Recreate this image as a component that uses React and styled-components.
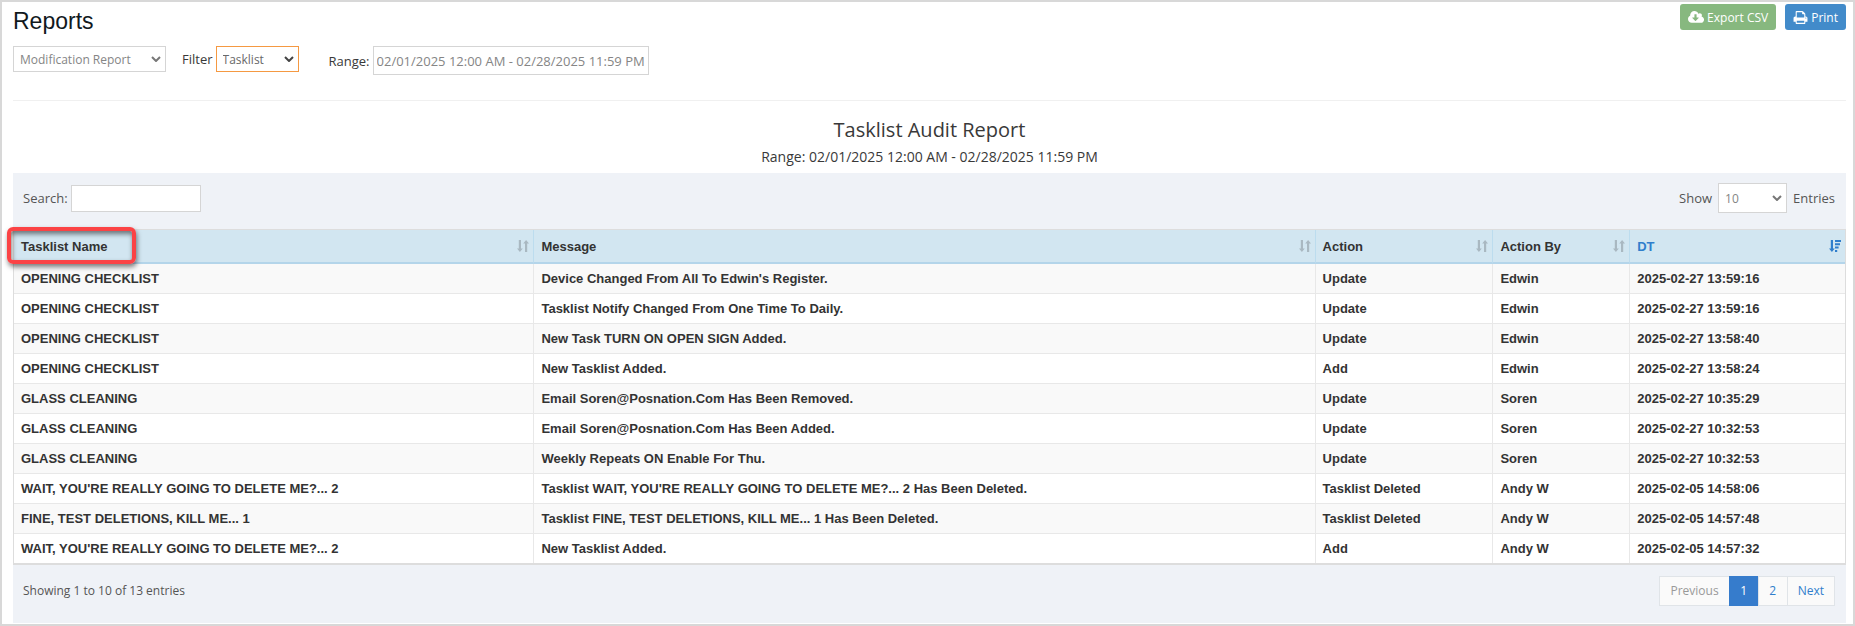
import { useState } from "react";
import styled, { createGlobalStyle, css } from "styled-components";

const GlobalStyle = createGlobalStyle`
	* {
		box-sizing: border-box;
	}

	body {
		margin: 0;
		background-color: #fff;
		color: #393939;
		font-family: "Open Sans", sans-serif;
		font-size: 13px;
		line-height: 20px;
	}

	button,
	input,
	select {
		font-family: inherit;
	}
`;

const Container = styled.div`
	display: flex;
	flex-direction: column;
	min-height: 100vh;
	border: 2px solid #d8d8d8;
	padding: 2px 7px 1px 11px;
`;

const Header = styled.header`
	display: flex;
	align-items: flex-start;
	justify-content: space-between;
`;

const PageTitle = styled.h1`
	margin: 0;
	font-family: "Liberation Sans", Arial, sans-serif;
	font-size: 23px;
	font-weight: 400;
	line-height: 34px;
	color: #11191d;
`;

const ButtonGroup = styled.div`
	display: flex;
	gap: 9px;
`;

const Button = styled.button`
	display: flex;
	align-items: center;
	gap: 3px;
	height: 26px;
	padding: 0 8px;
	border: none;
	border-radius: 3px;
	background-color: ${(props) => props.$color};
	color: white;
	font-size: 12px;
	cursor: pointer;
`;

const ButtonIcon = styled.svg`
	height: 15px;
	fill: currentColor;
`;

const Filters = styled.form`
	display: flex;
	align-items: flex-start;
	padding: 8px 0 25px;
	border-bottom: 1px solid #f0f0f0;
`;

const Field = styled.div`
	display: flex;
	align-items: center;
	gap: ${(props) => props.$gap || 3}px;
	margin-right: ${(props) => props.$space || 0}px;
`;

const SelectBox = styled.div`
	display: grid;
	align-items: center;
	width: ${(props) => props.$width}px;
	color: ${(props) => (props.$active ? "#444" : "#777")};

	> * {
		grid-area: 1 / 1;
	}
`;

const Select = styled.select`
	appearance: none;
	width: 100%;
	height: ${(props) => props.$height || 26}px;
	padding: 0 6px;
	border: 1px solid ${(props) => (props.$active ? "#f59942" : "#d5d5d5")};
	border-radius: 0;
	background-color: #fff;
	color: ${(props) => (props.$active ? "#696969" : "#858585")};
	font-size: 12px;
`;

const Chevron = styled.svg`
	justify-self: end;
	width: 10px;
	height: 6px;
	margin-right: 5px;
	fill: none;
	stroke: currentColor;
	stroke-width: 2;
	pointer-events: none;
`;

const Input = styled.input`
	width: ${(props) => props.$width}px;
	height: ${(props) => props.$height}px;
	padding: 0 3px;
	border: 1px solid #d5d5d5;
	border-radius: 0;
	background-color: #fff;
	color: #858585;
	font-size: 13px;
`;

const ReportHeading = styled.div`
	padding: 15px 0 3px;
	text-align: center;
`;

const ReportTitle = styled.h2`
	margin: 0;
	font-size: 20px;
	font-weight: 400;
	line-height: 28px;
`;

const ReportRange = styled.p`
	margin: 0;
	font-size: 14px;
	line-height: 26px;
`;

const Panel = styled.section`
	flex: 1;
	background-color: #eff2f7;
`;

const Toolbar = styled.div`
	display: flex;
	align-items: center;
	justify-content: space-between;
	padding: 10px 11px 16px 10px;
	color: #555;
`;

const Table = styled.table`
	width: 100%;
	table-layout: fixed;
	border-collapse: separate;
	border-spacing: 0;
	border: solid #ddd;
	border-width: 1px 1px 2px;
	background-color: #fff;
	font-family: "Liberation Sans", Arial, sans-serif;
	font-size: 13px;
	font-weight: 700;
	color: #333;
`;

const HeadCell = styled.th`
	height: 34px;
	padding: 0 4px 0 7px;
	border-left: 1px solid #bcdcee;
	border-bottom: 2px solid #b4d5ea;
	background-color: #d2e6f1;
	text-align: left;

	&:first-child {
		border-left: none;
	}
`;

const SortButton = styled.button`
	display: flex;
	align-items: center;
	justify-content: space-between;
	width: 100%;
	padding: 0;
	border: none;
	background: none;
	color: ${(props) => (props.$active ? "#307ecc" : "#333")};
	font-size: 13px;
	font-weight: 700;
	cursor: pointer;
`;

const HeadLabel = styled.span`
	position: relative;
`;

const Highlight = styled.span`
	position: absolute;
	inset: -12px -29px -10px -14px;
	border: 4px solid #fb4345;
	border-radius: 6px;
	box-shadow:
		1px 3px 5px rgba(0, 0, 0, 0.5),
		inset 1px 3px 5px rgba(0, 0, 0, 0.5);
`;

const SortIcon = styled.svg`
	width: 12px;
	height: 12px;
	fill: ${(props) => (props.$active ? "#307ecc" : "#a9b8c1")};
`;

const Row = styled.tr`
	background-color: #fff;

	&:nth-child(odd) {
		background-color: #f9f9f9;
	}
`;

const Cell = styled.td`
	height: 30px;
	padding: 0 7px;
	border-left: 1px solid #e8e8e8;
	border-bottom: 1px solid #e8e8e8;

	&:first-child {
		border-left: none;
	}

	${Row}:last-child & {
		height: 29px;
		border-bottom: none;
	}
`;

const PanelFooter = styled.div`
	display: flex;
	align-items: flex-start;
	justify-content: space-between;
	padding: 11px 11px 16px 10px;
	color: #555;
`;

const Info = styled.p`
	margin: 0;
	font-size: 12px;
	line-height: 30px;
`;

const Pagination = styled.nav`
	display: flex;
`;

const pageItem = css`
	min-width: 29px;
	height: 30px;
	padding: 0 10px;
	border: 1px solid #e0e4e8;
	border-right-width: 0;
	background-color: #fafafa;
	font-size: 12px;
	line-height: 28px;
	text-align: center;

	&:last-child {
		border-right-width: 1px;
	}
`;

const PageButton = styled.button`
	${pageItem}
	color: #999;
`;

const PageLink = styled.a`
	${pageItem}
	text-decoration: none;
	color: ${(props) => (props.$current ? "#fff" : "#307ecc")};
	${(props) =>
		props.$current &&
		css`
			background-color: #367ccc;
			border-color: #367ccc;
		`}
`;

const columns = [
	{ key: "name", label: "Tasklist Name", width: 520 },
	{ key: "message", label: "Message", width: 782 },
	{ key: "action", label: "Action", width: 178 },
	{ key: "by", label: "Action By", width: 137 },
	{ key: "dt", label: "DT", width: 216 },
];

const rows = [
	["OPENING CHECKLIST", "Device Changed From All To Edwin's Register.", "Update", "Edwin", "2025-02-27 13:59:16"],
	["OPENING CHECKLIST", "Tasklist Notify Changed From One Time To Daily.", "Update", "Edwin", "2025-02-27 13:59:16"],
	["OPENING CHECKLIST", "New Task TURN ON OPEN SIGN Added.", "Update", "Edwin", "2025-02-27 13:58:40"],
	["OPENING CHECKLIST", "New Tasklist Added.", "Add", "Edwin", "2025-02-27 13:58:24"],
	["GLASS CLEANING", "Email Soren@Posnation.Com Has Been Removed.", "Update", "Soren", "2025-02-27 10:35:29"],
	["GLASS CLEANING", "Email Soren@Posnation.Com Has Been Added.", "Update", "Soren", "2025-02-27 10:32:53"],
	["GLASS CLEANING", "Weekly Repeats ON Enable For Thu.", "Update", "Soren", "2025-02-27 10:32:53"],
	["WAIT, YOU'RE REALLY GOING TO DELETE ME?... 2", "Tasklist WAIT, YOU'RE REALLY GOING TO DELETE ME?... 2 Has Been Deleted.", "Tasklist Deleted", "Andy W", "2025-02-05 14:58:06"],
	["FINE, TEST DELETIONS, KILL ME... 1", "Tasklist FINE, TEST DELETIONS, KILL ME... 1 Has Been Deleted.", "Tasklist Deleted", "Andy W", "2025-02-05 14:57:48"],
	["WAIT, YOU'RE REALLY GOING TO DELETE ME?... 2", "New Tasklist Added.", "Add", "Andy W", "2025-02-05 14:57:32"],
];

const totalWidth = columns.reduce((sum, column) => sum + column.width, 0);

const CloudDownload = () => (
	<ButtonIcon viewBox="-64 0 1920 1792" aria-hidden="true">
		<path d="M1216 928q0-14-9-23t-23-9h-224v-352q0-13-9.5-22.5t-22.5-9.5h-192q-13 0-22.5 9.5t-9.5 22.5v352h-224q-13 0-22.5 9.5t-9.5 22.5q0 14 9 23l352 352q9 9 23 9t23-9l351-351q10-12 10-24zm640 224q0 159-112.5 271.5t-271.5 112.5h-1088q-185 0-316.5-131.5t-131.5-316.5q0-130 70-240t188-165q-2-30-2-43 0-212 150-362t362-150q156 0 285.5 87t188.5 231q71-62 166-62 106 0 181 75t75 181q0 76-41 138 130 31 213.5 135.5t83.5 238.5z" />
	</ButtonIcon>
);

const Printer = () => (
	<ButtonIcon viewBox="0 0 1792 1792" aria-hidden="true">
		<path d="M448 1536h896v-256h-896v256zm0-640h896v-384h-160q-40 0-68-28t-28-68v-160h-640v640zm1152 64q0-26-19-45t-45-19-45 19-19 45 19 45 45 19 45-19 19-45zm128 0v416q0 13-9.5 22.5t-22.5 9.5h-224v160q0 40-28 68t-68 28h-960q-40 0-68-28t-28-68v-160h-224q-13 0-22.5-9.5t-9.5-22.5v-416q0-79 56.5-135.5t135.5-56.5h64v-544q0-40 28-68t68-28h672q40 0 88 20t76 48l152 152q28 28 48 76t20 88v256h64q79 0 135.5 56.5t56.5 135.5z" />
	</ButtonIcon>
);

const Sort = ({ active }) => (
	<SortIcon viewBox="0 0 12 12" $active={active} aria-hidden="true">
		<path d="M1.8 0h2.2v8.6h1.8L2.9 12 0 8.6h1.8z" />
		{active ? (
			<path d="M6 0h6v2H6zM6 3.3h5v2H6zM6 6.6h3.6v2H6zM6 9.9h2.2v2H6z" />
		) : (
			<path d="M8 12h2.2V3.4H12L9.1 0 6.2 3.4H8z" />
		)}
	</SortIcon>
);

const Dropdown = ({ id, label, width, active, height, options }) => (
	<SelectBox $width={width} $active={active}>
		<Select id={id} $active={active} $height={height} aria-label={label}>
			{options.map((option) => (
				<option key={option}>{option}</option>
			))}
		</Select>
		<Chevron viewBox="0 0 10 6" aria-hidden="true">
			<path d="M1 1l4 4 4-4" />
		</Chevron>
	</SelectBox>
);

const App = () => {
	const [range, setRange] = useState("02/01/2025 12:00 AM - 02/28/2025 11:59 PM");
	const [search, setSearch] = useState("");

	return (
		<>
			<GlobalStyle />
			<Container>
				<Header>
					<PageTitle>Reports</PageTitle>
					<ButtonGroup>
						<Button type="button" $color="#87b87f">
							<CloudDownload />
							Export CSV
						</Button>
						<Button type="button" $color="#428bca">
							<Printer />
							Print
						</Button>
					</ButtonGroup>
				</Header>

				<Filters>
					<Field $space={16}>
						<Dropdown
							id="report"
							label="Report"
							width={153}
							options={["Modification Report"]}
						/>
					</Field>
					<Field $space={30}>
						<label htmlFor="filter">Filter</label>
						<Dropdown id="filter" width={83} active options={["Tasklist"]} />
					</Field>
					<Field>
						<label htmlFor="range">Range:</label>
						<Input
							id="range"
							$width={276}
							$height={29}
							value={range}
							onChange={(e) => setRange(e.target.value)}
						/>
					</Field>
				</Filters>

				<ReportHeading>
					<ReportTitle>Tasklist Audit Report</ReportTitle>
					<ReportRange>Range: {range}</ReportRange>
				</ReportHeading>

				<Panel>
					<Toolbar>
						<Field>
							<label htmlFor="search">Search:</label>
							<Input
								id="search"
								$width={130}
								$height={27}
								value={search}
								onChange={(e) => setSearch(e.target.value)}
							/>
						</Field>
						<Field $gap={6}>
							<label htmlFor="entries">Show</label>
							<Dropdown id="entries" width={69} height={30} options={["10"]} />
							<span>Entries</span>
						</Field>
					</Toolbar>

					<Table>
						<colgroup>
							{columns.map((column) => (
								<col
									key={column.key}
									style={{ width: `${(column.width / totalWidth) * 100}%` }}
								/>
							))}
						</colgroup>
						<thead>
							<tr>
								{columns.map(({ key, label }) => (
									<HeadCell key={key} scope="col">
										<SortButton type="button" $active={key === "dt"}>
											<HeadLabel>
												{label}
												{key === "name" && <Highlight />}
											</HeadLabel>
											<Sort active={key === "dt"} />
										</SortButton>
									</HeadCell>
								))}
							</tr>
						</thead>
						<tbody>
							{rows.map((row, index) => (
								<Row key={index}>
									{row.map((value, i) => (
										<Cell key={columns[i].key}>{value}</Cell>
									))}
								</Row>
							))}
						</tbody>
					</Table>

					<PanelFooter>
						<Info>Showing 1 to 10 of 13 entries</Info>
						<Pagination aria-label="Pages">
							<PageButton type="button" disabled>
								Previous
							</PageButton>
							<PageLink href="#1" $current aria-current="page">
								1
							</PageLink>
							<PageLink href="#2">2</PageLink>
							<PageLink href="#2">Next</PageLink>
						</Pagination>
					</PanelFooter>
				</Panel>
			</Container>
		</>
	);
};

export default App;
